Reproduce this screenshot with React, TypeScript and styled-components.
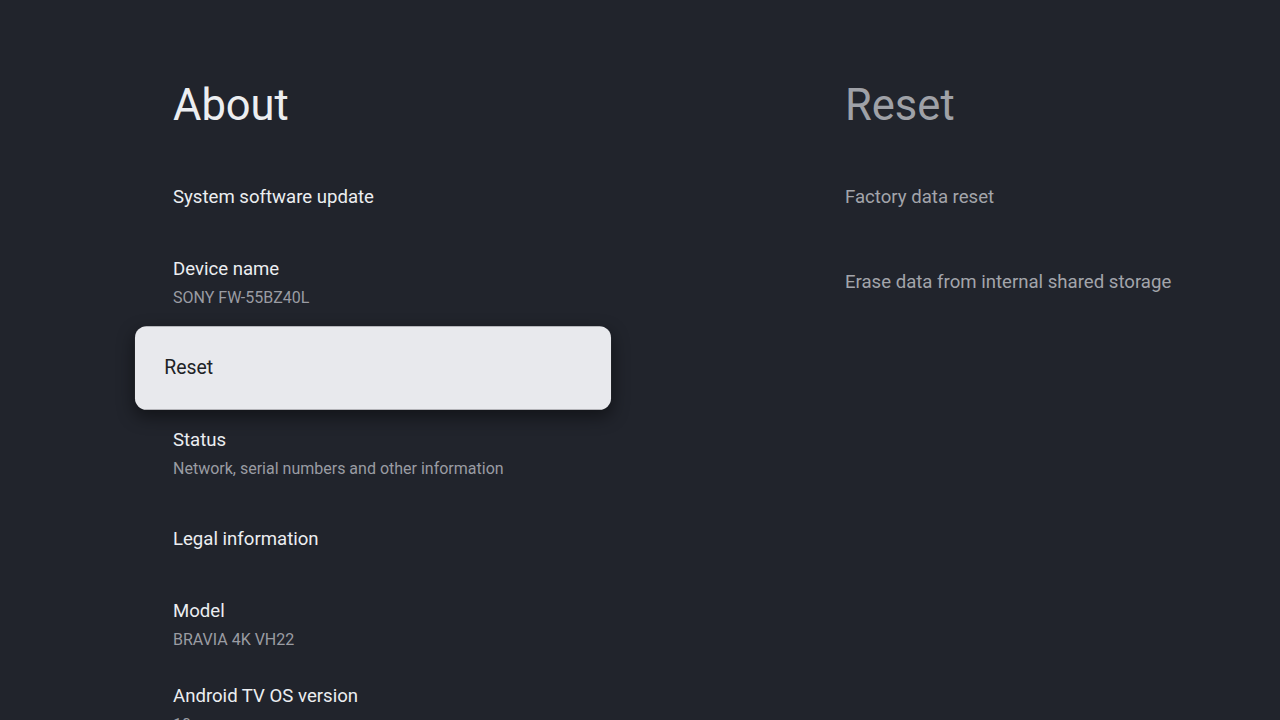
import styled, { createGlobalStyle } from 'styled-components';

type Setting = { title: string; summary?: string; focused?: boolean };

const aboutItems: Setting[] = [
  { title: 'System software update' },
  { title: 'Device name', summary: 'SONY FW-55BZ40L' },
  { title: 'Reset', focused: true },
  { title: 'Status', summary: 'Network, serial numbers and other information' },
  { title: 'Legal information' },
  { title: 'Model', summary: 'BRAVIA 4K VH22' },
  { title: 'Android TV OS version', summary: '10' },
];

const resetItems: Setting[] = [
  { title: 'Factory data reset' },
  { title: 'Erase data from internal shared storage' },
];

export default function App() {
  return (
    <>
      <GlobalStyle />
      <Screen>
        <Pane>
          <Heading>About</Heading>
          <List>
            {aboutItems.map((item) => (
              <Row key={item.title} $focused={item.focused}>
                <Title $focused={item.focused}>{item.title}</Title>
                {item.summary && <Summary>{item.summary}</Summary>}
              </Row>
            ))}
          </List>
        </Pane>
        <Pane $preview>
          <Heading $dim>Reset</Heading>
          <List>
            {resetItems.map((item) => (
              <Row key={item.title}>
                <Title $dim>{item.title}</Title>
              </Row>
            ))}
          </List>
        </Pane>
      </Screen>
    </>
  );
}

const GlobalStyle = createGlobalStyle`
  html, body {
    margin: 0;
    padding: 0;
    background: #21242c;
    overflow: hidden;
  }
  body {
    font-family: Roboto, "Noto Sans", sans-serif;
    -webkit-font-smoothing: antialiased;
  }
`;

const Screen = styled.div`
  width: 1280px;
  height: 720px;
  overflow: hidden;
  background: #21242c;
  display: grid;
  grid-template-columns: 672px 1fr;
`;

const Pane = styled.div<{ $preview?: boolean }>`
  display: flex;
  flex-direction: column;
  padding-top: 80px;
  padding-left: 145px;
  width: ${(p) => (p.$preview ? '500px' : '456px')};
`;

const Heading = styled.h1<{ $dim?: boolean }>`
  margin: 0 0 0 28px;
  font-size: 43.5px;
  font-weight: 400;
  line-height: 52px;
  color: ${(p) => (p.$dim ? '#9fa1a7' : '#eceef1')};
`;

const List = styled.div`
  display: flex;
  flex-direction: column;
  gap: 5.5px;
  margin-top: 24.5px;
`;

const Row = styled.div<{ $focused?: boolean }>`
  height: 80px;
  box-sizing: border-box;
  padding: 0 28px;
  display: flex;
  flex-direction: column;
  justify-content: center;
  gap: 9px;
  border-radius: 11px;
  background: ${(p) => (p.$focused ? '#e8e9ed' : 'transparent')};
  transform: ${(p) => (p.$focused ? 'scale(1.044)' : 'none')};
  box-shadow: ${(p) =>
    p.$focused ? '0 6px 16px rgba(0, 0, 0, 0.45)' : 'none'};
`;

const Title = styled.div<{ $focused?: boolean; $dim?: boolean }>`
  font-size: 18.6px;
  line-height: 22px;
  color: ${(p) => (p.$focused ? '#202226' : p.$dim ? '#a3a5ab' : '#eceef1')};
  white-space: nowrap;
`;

const Summary = styled.div`
  font-size: 16px;
  line-height: 18px;
  color: #9a9ca3;
  white-space: nowrap;
`;
